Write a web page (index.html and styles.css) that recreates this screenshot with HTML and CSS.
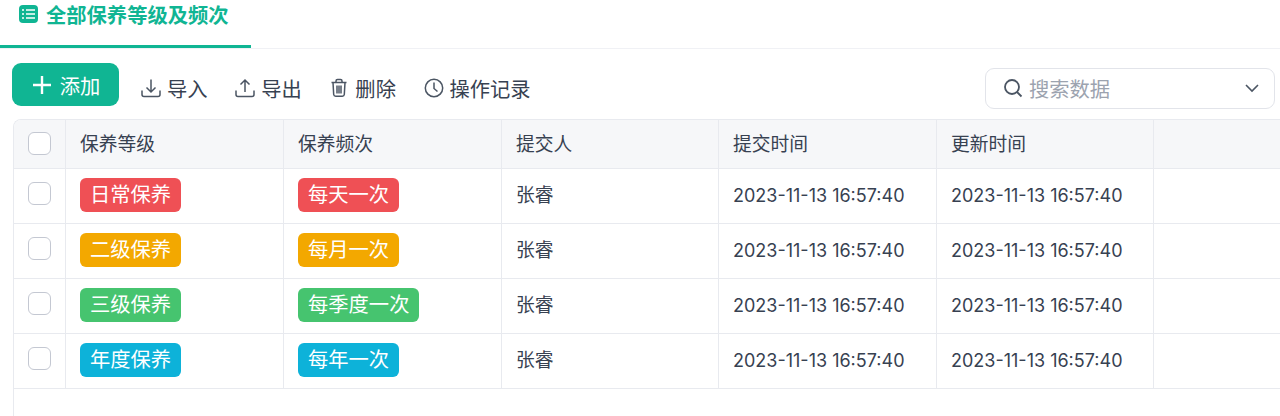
FILE: index.html
```html
<!DOCTYPE html>
<html lang="zh-CN">
<head>
    <meta charset="UTF-8">
    <title>保养等级及频次</title>
    <link rel="stylesheet" href="styles.css">
</head>
<body>

<div class="tabs">
    <div class="tab active">
        <svg class="tab-icon" viewBox="0 0 19 18">
            <rect width="19" height="18" rx="4" fill="#10b593"/>
            <path d="M3 5h2M7 5h9M3 9h2M7 9h9M3 13h2M7 13h9" stroke="#fff" stroke-width="1.700" fill="none"/>
        </svg>
        全部保养等级及频次
    </div>
</div>

<div class="toolbar">
    <button class="btn-add" type="button">
        <svg viewBox="0 0 20 20" width="20" height="20">
            <path d="M10 1v18M1 10h18" stroke="#fff" stroke-width="2.400" fill="none"/>
        </svg>
        添加
    </button>
    <div class="tool">
        <svg viewBox="0 0 20 20" width="20" height="20">
            <path d="M10 1.500v12M5.500 9.500l4.500 4.500 4.500-4.500M1 12.500v4a2 2 0 0 0 2 2h14a2 2 0 0 0 2-2v-4"/>
        </svg>
        导入
    </div>
    <div class="tool">
        <svg viewBox="0 0 20 20" width="20" height="20">
            <path d="M10 14V2M5.500 6.500L10 2l4.500 4.500M1 12.500v4a2 2 0 0 0 2 2h14a2 2 0 0 0 2-2v-4"/>
        </svg>
        导出
    </div>
    <div class="tool">
        <svg viewBox="0 0 20 20" width="20" height="20">
            <path d="M2.500 4.500h15M7 4.500V3a1.500 1.500 0 0 1 1.500-1.500h3A1.500 1.500 0 0 1 13 3v1.500M4 4.500l.7 12a2 2 0 0 0 2 1.800h6.600a2 2 0 0 0 2-1.800l.7-12M8 7.500v8M10 7.500v8M12 7.500v8"/>
        </svg>
        删除
    </div>
    <div class="tool">
        <svg viewBox="0 0 20 20" width="20" height="20">
            <circle cx="10" cy="10" r="8.700"/>
            <path d="M10 4.500V10.500l3.500 3"/>
        </svg>
        操作记录
    </div>
    <div class="search">
        <svg class="search-icon" viewBox="0 0 20 20" width="20" height="20">
            <circle cx="9" cy="9" r="7"/>
            <path d="M14 14l4.500 4.500"/>
        </svg>
        <span class="search-text">搜索数据</span>
        <svg class="search-arrow" viewBox="0 0 14 9" width="14" height="9">
            <path d="M1 1l6 6 6-6"/>
        </svg>
    </div>
</div>

<div class="table-wrap">
    <table>
        <colgroup>
            <col class="col-check">
            <col class="col-wide">
            <col class="col-wide">
            <col class="col-narrow">
            <col class="col-wide">
            <col class="col-narrow">
            <col class="col-rest">
        </colgroup>
        <thead>
        <tr>
            <th><span class="check"></span></th>
            <th>保养等级</th>
            <th>保养频次</th>
            <th>提交人</th>
            <th>提交时间</th>
            <th>更新时间</th>
            <th></th>
        </tr>
        </thead>
        <tbody>
        <tr>
            <td><span class="check"></span></td>
            <td><span class="tag red">日常保养</span></td>
            <td><span class="tag red">每天一次</span></td>
            <td class="name">张睿</td>
            <td class="time">2023-11-13 16:57:40</td>
            <td class="time">2023-11-13 16:57:40</td>
            <td></td>
        </tr>
        <tr>
            <td><span class="check"></span></td>
            <td><span class="tag orange">二级保养</span></td>
            <td><span class="tag orange">每月一次</span></td>
            <td class="name">张睿</td>
            <td class="time">2023-11-13 16:57:40</td>
            <td class="time">2023-11-13 16:57:40</td>
            <td></td>
        </tr>
        <tr>
            <td><span class="check"></span></td>
            <td><span class="tag green">三级保养</span></td>
            <td><span class="tag green">每季度一次</span></td>
            <td class="name">张睿</td>
            <td class="time">2023-11-13 16:57:40</td>
            <td class="time">2023-11-13 16:57:40</td>
            <td></td>
        </tr>
        <tr>
            <td><span class="check"></span></td>
            <td><span class="tag blue">年度保养</span></td>
            <td><span class="tag blue">每年一次</span></td>
            <td class="name">张睿</td>
            <td class="time">2023-11-13 16:57:40</td>
            <td class="time">2023-11-13 16:57:40</td>
            <td></td>
        </tr>
        </tbody>
    </table>
</div>

</body>
</html>
```

FILE: styles.css
```css
html, body {
    height: 100%;
}

body {
    margin: 0;
    overflow: hidden;
    background-color: #fff;
    color: #374151;
    font-family: Inter, "Noto Sans CJK SC", sans-serif;
    font-size: 18.75px;
    display: flex;
    flex-direction: column;
}

.tabs {
    height: 49px;
    flex: none;
    box-sizing: border-box;
    border-bottom: 1px solid #f0f1f5;
    display: flex;
}

.tab {
    width: 251px;
    height: 48px;
    box-sizing: border-box;
    padding: 0 0 17px 19px;
    display: flex;
    align-items: center;
    gap: 8px;
    color: #10b593;
    font-size: 20.3px;
    font-weight: 700;
    border-bottom: 3px solid #10b593;
}

.tab-icon {
    width: 19px;
    height: 18px;
}

.toolbar {
    height: 70px;
    flex: none;
    box-sizing: border-box;
    padding: 18px 5px 10px 12px;
    display: flex;
    align-items: center;
}

.btn-add {
    width: 107px;
    height: 43px;
    align-self: flex-start;
    margin: -4px 22px 0 0;
    border: none;
    border-radius: 9px;
    padding: 0 0 0 1.500px;
    display: flex;
    align-items: center;
    justify-content: center;
    gap: 7.500px;
    background-color: #10b593;
    color: #fff;
    font-family: inherit;
    font-size: 20.3px;
}

.tool {
    display: flex;
    align-items: center;
    gap: 6px;
    margin-right: 27.6px;
    font-size: 20.3px;
    color: #374151;
}

.tool svg {
    fill: none;
    stroke: #4b5563;
    stroke-width: 1.500;
}

.search {
    margin-left: auto;
    width: 290px;
    height: 41px;
    box-sizing: border-box;
    border: 1px solid #e2e4ea;
    border-radius: 9px;
    padding: 0 15px 0 17px;
    display: flex;
    align-items: center;
    font-size: 20.3px;
    color: #9ca3af;
}

.search-icon {
    fill: none;
    stroke: #4b5563;
    stroke-width: 1.800;
    margin-right: 6px;
}

.search-arrow {
    fill: none;
    stroke: #4b5563;
    stroke-width: 1.600;
    margin-left: auto;
}

.table-wrap {
    flex: 1;
    margin-left: 13px;
    border-left: 1px solid #e8eaef;
    border-top: 1px solid #e8eaef;
    border-top-left-radius: 8px;
    overflow: hidden;
}

table {
    border-collapse: separate;
    border-spacing: 0;
    table-layout: fixed;
    width: 1400px;
}

.col-check { width: 52px; }
.col-wide { width: 218px; }
.col-narrow { width: 217px; }
.col-rest { width: 260px; }

th, td {
    padding: 0 14px 2px;
    line-height: 24px;
    text-align: left;
    font-weight: 400;
    border-right: 1px solid #e8eaef;
    border-bottom: 1px solid #e8eaef;
    white-space: nowrap;
}

th {
    height: 46px;
    padding-top: 2px;
    padding-bottom: 0;
    background-color: #f6f7f9;
}

td {
    height: 52px;
}

td.name {
    padding-bottom: 0;
    height: 54px;
}

td.time {
    font-size: 18px;
    padding-bottom: 1px;
    height: 53px;
}

th:first-child, td:first-child {
    padding-right: 0;
    font-size: 0;
}

th:first-child {
    padding-top: 0;
    padding-bottom: 1px;
    height: 47px;
}

td:first-child {
    padding-bottom: 6px;
    height: 48px;
}

.check {
    display: inline-block;
    width: 23px;
    height: 23px;
    box-sizing: border-box;
    border: 1.500px solid #c4c8d2;
    border-radius: 6px;
    background-color: #fff;
    vertical-align: middle;
}

.tag {
    display: inline-block;
    height: 34px;
    line-height: 33px;
    padding: 0 10px;
    border-radius: 6px;
    color: #fff;
    font-size: 20.3px;
    vertical-align: middle;
}

.red { background-color: #ef5055; }
.orange { background-color: #f3a800; }
.green { background-color: #46c46f; }
.blue { background-color: #0db2d9; }
```
